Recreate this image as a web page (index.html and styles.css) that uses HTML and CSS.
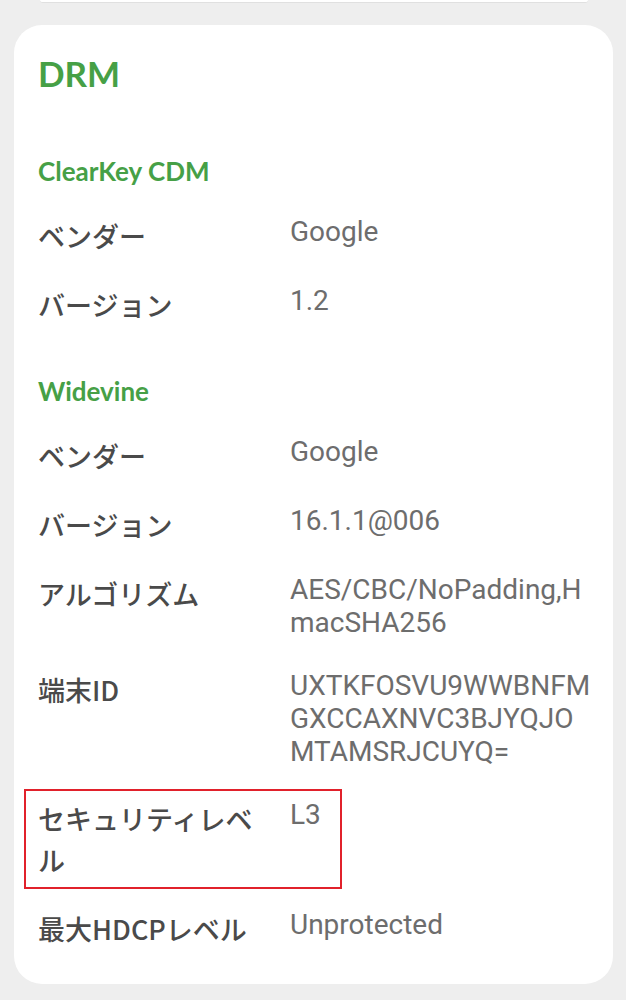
FILE: index.html
```html
<!DOCTYPE html>
<html lang="ja">
<head>
<meta charset="utf-8">
<title>DRM</title>
<link rel="stylesheet" href="styles.css">
</head>
<body>
<div class="prev-card"></div>
<div class="card">
  <h2 class="card-title">DRM</h2>
  <section class="section">
    <h3 class="section-title">ClearKey CDM</h3>
    <div class="row"><div class="label">ベンダー</div><div class="value">Google</div></div>
    <div class="row"><div class="label">バージョン</div><div class="value">1.2</div></div>
  </section>
  <section class="section">
    <h3 class="section-title">Widevine</h3>
    <div class="row"><div class="label">ベンダー</div><div class="value">Google</div></div>
    <div class="row"><div class="label">バージョン</div><div class="value">16.1.1@006</div></div>
    <div class="row"><div class="label">アルゴリズム</div><div class="value">AES/CBC/NoPadding,HmacSHA256</div></div>
    <div class="row"><div class="label">端末ID</div><div class="value">UXTKFOSVU9WWBNFMGXCCAXNVC3BJYQJOMTAMSRJCUYQ=</div></div>
    <div class="row highlight"><div class="label">セキュリティレベル</div><div class="value">L3</div></div>
    <div class="row"><div class="label">最大HDCPレベル</div><div class="value">Unprotected</div></div>
  </section>
</div>
</body>
</html>
```
FILE: styles.css
```css
html, body {
  margin: 0;
  padding: 0;
  background: #eeeeee;
}

.prev-card {
  height: 2px;
  margin: 0 38px 0 40px;
  background: #ffffff;
  border-bottom: 1px solid #e0e0e0;
  border-radius: 0 0 3px 3px;
}

.card {
  margin: 22px 13px 0 14px;
  background: #ffffff;
  border-radius: 28px;
  padding: 27px 22px 35px 24px;
}

.card-title {
  margin: 0 0 61px 0;
  font-family: "Lato", "Noto Sans", sans-serif;
  font-weight: 700;
  font-size: 35px;
  line-height: 42px;
  color: #46a046;
}

.section {
  display: flex;
  flex-direction: column;
  gap: 28px;
}

.section + .section {
  margin-top: 50px;
}

.section-title {
  margin: 0;
  font-family: "Lato", "Noto Sans", sans-serif;
  font-weight: 700;
  font-size: 26px;
  line-height: 32px;
  color: #46a046;
}

.row {
  display: grid;
  grid-template-columns: 236px 1fr;
  column-gap: 16px;
  align-items: start;
  position: relative;
}

.label {
  font-family: "Noto Sans CJK JP", "Noto Sans", sans-serif;
  font-weight: 500;
  font-size: 27px;
  line-height: 41px;
  color: #4a4a4a;
}

.value {
  font-family: "Roboto", "Noto Sans", sans-serif;
  font-size: 28px;
  line-height: 33px;
  padding-bottom: 2px;
  color: #6d6d6d;
  word-break: break-all;
}

.highlight::after {
  content: "";
  position: absolute;
  top: -9px;
  bottom: -9px;
  left: -14px;
  width: 318px;
  box-sizing: border-box;
  border: 2px solid #e1212b;
  pointer-events: none;
}
```
